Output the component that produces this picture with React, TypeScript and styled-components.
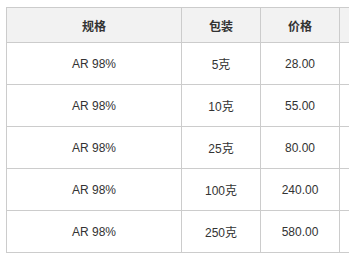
import React from 'react';
import styled, { createGlobalStyle } from 'styled-components';

const GlobalStyle = createGlobalStyle`
  html, body {
    margin: 0;
    padding: 0;
    background: #fff;
    overflow: hidden;
  }
  body {
    font-family: "Liberation Sans", Arial, "Noto Sans CJK SC", sans-serif;
    font-size: 12px;
    color: #333;
  }
`;

const Wrap = styled.div`
  padding: 7px 0 0 6px;
  width: 500px;
`;

const Table = styled.table`
  border-collapse: collapse;
  table-layout: fixed;
  width: 433px;
`;

const HeadRow = styled.tr`
  height: 35px;
  background: #f2f2f2;
`;

const Row = styled.tr`
  height: 42px;
`;

const HeadCell = styled.th`
  border: 1px solid #ccc;
  padding: 0;
  font-weight: bold;
  text-align: center;
  color: #333;
`;

const Cell = styled.td`
  border: 1px solid #ccc;
  padding: 0;
  text-align: center;
  color: #333;
`;

type Item = { spec: string; pack: string; price: string };

const items: Item[] = [
  { spec: 'AR 98%', pack: '5克', price: '28.00' },
  { spec: 'AR 98%', pack: '10克', price: '55.00' },
  { spec: 'AR 98%', pack: '25克', price: '80.00' },
  { spec: 'AR 98%', pack: '100克', price: '240.00' },
  { spec: 'AR 98%', pack: '250克', price: '580.00' },
];

const App: React.FC = () => {
  return (
    <Wrap>
      <GlobalStyle />
      <Table>
        <colgroup>
          <col style={{ width: 175 }} />
          <col style={{ width: 79 }} />
          <col style={{ width: 79 }} />
          <col style={{ width: 100 }} />
        </colgroup>
        <thead>
          <HeadRow>
            <HeadCell>规格</HeadCell>
            <HeadCell>包装</HeadCell>
            <HeadCell>价格</HeadCell>
            <HeadCell></HeadCell>
          </HeadRow>
        </thead>
        <tbody>
          {items.map((item, i) => (
            <Row key={i}>
              <Cell>{item.spec}</Cell>
              <Cell>{item.pack}</Cell>
              <Cell>{item.price}</Cell>
              <Cell></Cell>
            </Row>
          ))}
        </tbody>
      </Table>
    </Wrap>
  );
};

export default App;
